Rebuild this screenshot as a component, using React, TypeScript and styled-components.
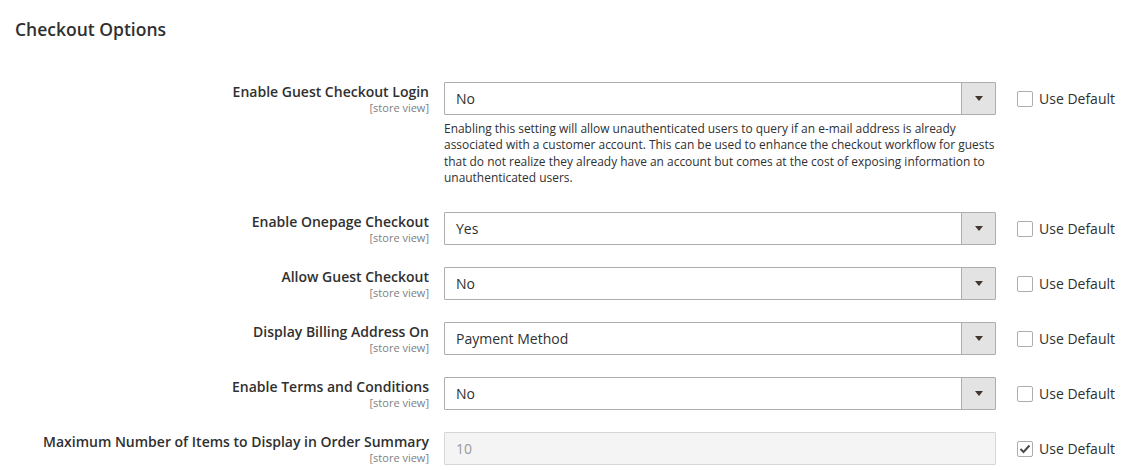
import React from "react";
import styled, { createGlobalStyle } from "styled-components";

const GlobalStyle = createGlobalStyle`
  html, body {
    margin: 0;
    padding: 0;
    background: #ffffff;
  }
  body {
    font-family: "Open Sans", "Liberation Sans", sans-serif;
    color: #303030;
  }
`;

type Field = {
  label: string;
  value: string;
  note?: string;
  disabled?: boolean;
  useDefault?: boolean;
};

const fields: Field[] = [
  {
    label: "Enable Guest Checkout Login",
    value: "No",
    note:
      "Enabling this setting will allow unauthenticated users to query if an e-mail address is already associated with a customer account. This can be used to enhance the checkout workflow for guests that do not realize they already have an account but comes at the cost of exposing information to unauthenticated users.",
  },
  { label: "Enable Onepage Checkout", value: "Yes" },
  { label: "Allow Guest Checkout", value: "No" },
  { label: "Display Billing Address On", value: "Payment Method" },
  { label: "Enable Terms and Conditions", value: "No" },
  {
    label: "Maximum Number of Items to Display in Order Summary",
    value: "10",
    disabled: true,
    useDefault: true,
  },
];

function App() {
  return (
    <>
      <GlobalStyle />
      <Page>
        <Title>Checkout Options</Title>
        <Fieldset>
          {fields.map((f) => (
            <Row key={f.label}>
              <Label>
                <LabelText>{f.label}</LabelText>
                <Scope>[store view]</Scope>
              </Label>
              <Control>
                {f.disabled ? (
                  <Input>{f.value}</Input>
                ) : (
                  <Select>
                    <SelectValue>{f.value}</SelectValue>
                    <SelectArrow>
                      <svg width="8" height="5" viewBox="0 0 8 5">
                        <path d="M0 0 H8 L4 5 Z" fill="#41362f" />
                      </svg>
                    </SelectArrow>
                  </Select>
                )}
                {f.note && <Note>{f.note}</Note>}
              </Control>
              <UseDefault>
                <Checkbox>
                  {f.useDefault && (
                    <svg width="12" height="10" viewBox="0 0 12 10">
                      <path
                        d="M1.5 5 L4.5 8 L10.5 1.5"
                        fill="none"
                        stroke="#514943"
                        strokeWidth="2"
                      />
                    </svg>
                  )}
                </Checkbox>
                <span>Use Default</span>
              </UseDefault>
            </Row>
          ))}
        </Fieldset>
      </Page>
    </>
  );
}

export default App;

const Page = styled.div`
  width: 1126px;
  padding-top: 18px;
`;

const Title = styled.div`
  padding-left: 15px;
  font-size: 17.5px;
  font-weight: 600;
  line-height: 22px;
  color: #303030;
`;

const Fieldset = styled.div`
  display: flex;
  flex-direction: column;
  gap: 22px;
  margin-top: 42px;
`;

const Row = styled.div`
  display: flex;
  align-items: flex-start;
`;

const Label = styled.div`
  width: 429px;
  display: flex;
  flex-direction: column;
  align-items: flex-end;
  text-align: right;
`;

const LabelText = styled.div`
  font-size: 14px;
  font-weight: 600;
  line-height: 19px;
  color: #303030;
`;

const Scope = styled.div`
  font-size: 11px;
  line-height: 13px;
  color: #808080;
`;

const Control = styled.div`
  width: 552px;
  margin-left: 15px;
`;

const Select = styled.div`
  box-sizing: border-box;
  height: 33px;
  display: flex;
  align-items: stretch;
  border: 1px solid #adadad;
  border-radius: 1px;
  background: #ffffff;
`;

const SelectValue = styled.div`
  flex: 1;
  display: flex;
  align-items: center;
  padding-left: 11px;
  font-size: 14px;
  color: #303030;
`;

const SelectArrow = styled.div`
  width: 33px;
  display: flex;
  align-items: center;
  justify-content: center;
  background: #e3e3e3;
  border-left: 1px solid #adadad;
`;

const Input = styled.div`
  box-sizing: border-box;
  height: 33px;
  display: flex;
  align-items: center;
  padding-left: 11px;
  font-size: 14px;
  border: 1px solid #d6d6d6;
  border-radius: 1px;
  background: #f4f4f4;
  color: #999999;
`;

const Note = styled.div`
  margin-top: 6px;
  margin-bottom: 4px;
  margin-right: -6px;
  font-size: 11.95px;
  line-height: 16.3px;
  color: #303030;
`;

const UseDefault = styled.label`
  display: flex;
  align-items: center;
  gap: 6px;
  margin-left: 21px;
  height: 33px;
  font-size: 14px;
  color: #303030;
`;

const Checkbox = styled.span`
  box-sizing: border-box;
  width: 16px;
  height: 16px;
  display: flex;
  align-items: center;
  justify-content: center;
  border: 1px solid #adadad;
  border-radius: 2px;
  background: #ffffff;
`;
